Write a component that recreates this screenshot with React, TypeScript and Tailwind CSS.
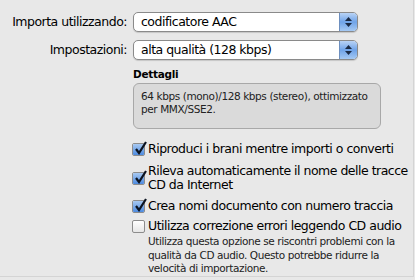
import React from 'react'

const font = { fontFamily: '"DejaVu Sans", "Liberation Sans", sans-serif' }

const Select = ({ value }: { value: string }) => (
  <div className="flex h-[20px] w-[225px] items-center rounded-[5px] border border-[#8a8a8a] bg-white pl-[7px] shadow-[0_1px_1px_rgba(0,0,0,0.15)]">
    <span className="flex-1 text-[12.5px] tracking-[-0.5px] text-black">{value}</span>
    <div className="flex h-[18px] w-[18px] flex-col items-center justify-center gap-[2px] rounded-r-[4px] border-l border-[#6d8fbf] bg-gradient-to-b from-[#b9d3f5] via-[#6fa3e8] to-[#a5c9f3]">
      <svg width="7" height="4" viewBox="0 0 7 4"><path d="M0 4 L3.5 0 L7 4 Z" fill="#1a2a44" /></svg>
      <svg width="7" height="4" viewBox="0 0 7 4"><path d="M0 0 L3.5 4 L7 0 Z" fill="#1a2a44" /></svg>
    </div>
  </div>
)

const Check = ({ on }: { on: boolean }) => (
  <div className="relative h-[13px] w-[13px] shrink-0 rounded-[2px] border border-[#8c8c8c] bg-gradient-to-b from-white to-[#e6e6e6]">
    {on && (
      <div className="absolute inset-0 rounded-[1px] bg-gradient-to-b from-[#a8c9f1] to-[#4d8be0]">
        <svg className="absolute left-[1px] top-[-3px]" width="13" height="14" viewBox="0 0 13 14">
          <path d="M2 8 L5 12 L12 1" stroke="#0b1320" strokeWidth="2.2" fill="none" />
        </svg>
      </div>
    )}
  </div>
)

export default function App() {
  return (
    <div className="h-[280px] w-[415px] overflow-hidden bg-[#e8e8e8] text-black" style={font}>
      <div className="flex h-[277px] w-[414px] flex-col border-r border-b border-[#d4d4d4] pt-[12px]">
        <div className="flex items-center">
          <span className="w-[127px] text-right text-[12.5px] tracking-[-0.5px]">Importa utilizzando:</span>
          <div className="ml-[6px]"><Select value="codificatore AAC" /></div>
        </div>
        <div className="mt-[8px] flex items-center">
          <span className="w-[127px] text-right text-[12.5px] tracking-[-0.5px]">Impostazioni:</span>
          <div className="ml-[6px]"><Select value="alta qualità (128 kbps)" /></div>
        </div>
        <div className="ml-[133px] mt-[8px] w-[248px]">
          <div className="text-[10.5px] font-bold leading-[13px] tracking-[-0.3px]">Dettagli</div>
          <div className="mt-[2px] h-[46px] rounded-[6px] border border-[#a8a8a8] bg-[#dadada] px-[7px] pt-[6px] text-[10.5px] leading-[13px] tracking-[-0.4px] text-[#222]">
            64 kbps (mono)/128 kbps (stereo), ottimizzato<br />per MMX/SSE2.
          </div>
        </div>
        <div className="ml-[132px] mt-[13px] flex flex-col text-[12.5px] leading-[14px] tracking-[-0.5px]">
          <div className="flex items-center gap-[3px]">
            <Check on />
            <span>Riproduci i brani mentre importi o converti</span>
          </div>
          <div className="mt-[8px] flex items-center gap-[3px]">
            <Check on />
            <span>Rileva automaticamente il nome delle tracce<br />CD da Internet</span>
          </div>
          <div className="mt-[7px] flex items-center gap-[3px]">
            <Check on />
            <span>Crea nomi documento con numero traccia</span>
          </div>
          <div className="mt-[6px] flex items-center gap-[3px]">
            <Check on={false} />
            <span>Utilizza correzione errori leggendo CD audio</span>
          </div>
          <div className="ml-[16px] mt-[2px] text-[10.5px] leading-[13.5px] tracking-[-0.4px] text-[#222]">
            Utilizza questa opzione se riscontri problemi con la<br />qualità da CD audio. Questo potrebbe ridurre la<br />velocità di importazione.
          </div>
        </div>
      </div>
    </div>
  )
}
